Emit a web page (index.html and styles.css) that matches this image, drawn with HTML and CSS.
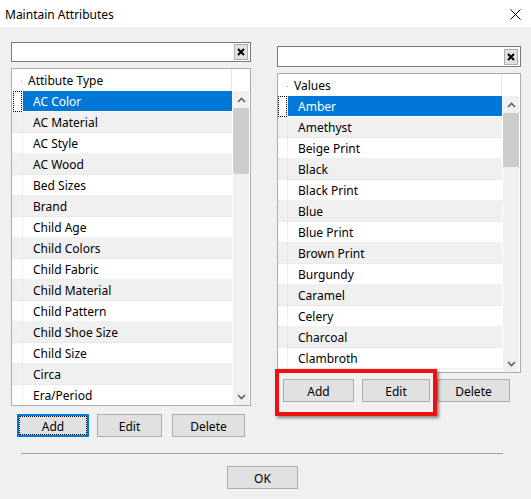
FILE: index.html
```html
<!DOCTYPE html>
<html>
<head>
<meta charset="utf-8">
<link rel="stylesheet" href="styles.css">
</head>
<body>
<div class="dialog">
  <div class="titlebar">
    <span class="title">Maintain Attributes</span>
    <svg class="close" width="11" height="11" viewBox="0 0 11 11"><path d="M0.5 0.5 L10.5 10.5 M10.5 0.5 L0.5 10.5" stroke="#000" stroke-width="1" fill="none"/></svg>
  </div>
  <div class="content">
    <div class="panels">
      <div class="panel panel-left">
        <div class="search search-left">
          <span class="clear"><svg width="8" height="8" viewBox="0 0 8 8"><path d="M1 1 L7 7 M7 1 L1 7" stroke="#000" stroke-width="2" fill="none"/></svg></span>
        </div>
        <div class="list list-left">
          <div class="grid">
            <div class="header"><span class="hind"></span><span class="hcell">Attibute Type</span></div>
            <div class="row sel"><span class="ind"><span class="focus"></span></span><span class="cell">AC Color</span></div>
            <div class="row alt"><span class="ind"></span><span class="cell">AC Material</span></div>
            <div class="row"><span class="ind"></span><span class="cell">AC Style</span></div>
            <div class="row alt"><span class="ind"></span><span class="cell">AC Wood</span></div>
            <div class="row"><span class="ind"></span><span class="cell">Bed Sizes</span></div>
            <div class="row alt"><span class="ind"></span><span class="cell">Brand</span></div>
            <div class="row"><span class="ind"></span><span class="cell">Child Age</span></div>
            <div class="row alt"><span class="ind"></span><span class="cell">Child Colors</span></div>
            <div class="row"><span class="ind"></span><span class="cell">Child Fabric</span></div>
            <div class="row alt"><span class="ind"></span><span class="cell">Child Material</span></div>
            <div class="row"><span class="ind"></span><span class="cell">Child Pattern</span></div>
            <div class="row alt"><span class="ind"></span><span class="cell">Child Shoe Size</span></div>
            <div class="row"><span class="ind"></span><span class="cell">Child Size</span></div>
            <div class="row alt"><span class="ind"></span><span class="cell">Circa</span></div>
            <div class="row"><span class="ind"></span><span class="cell">Era/Period</span></div>
          </div>
          <div class="vscroll">
            <div class="vs-head"></div>
            <div class="track track-left">
              <svg class="arrow" width="9" height="6" viewBox="0 0 9 6"><path d="M1 5 L4.5 1.5 L8 5" stroke="#606060" stroke-width="1.6" fill="none"/></svg>
              <div class="thumb thumb-left"></div>
              <div class="spring"></div>
              <svg class="arrow" width="9" height="6" viewBox="0 0 9 6"><path d="M1 1 L4.5 4.5 L8 1" stroke="#606060" stroke-width="1.6" fill="none"/></svg>
            </div>
          </div>
        </div>
        <div class="buttons buttons-left">
          <button class="btn focused w-add">Add</button>
          <button class="btn w-edit">Edit</button>
          <button class="btn w-del">Delete</button>
        </div>
      </div>
      <div class="panel panel-right">
        <div class="search search-right">
          <span class="clear"><svg width="8" height="8" viewBox="0 0 8 8"><path d="M1 1 L7 7 M7 1 L1 7" stroke="#000" stroke-width="2" fill="none"/></svg></span>
        </div>
        <div class="list list-right">
          <div class="grid">
            <div class="header"><span class="hind hind-r"></span><span class="hcell">Values</span></div>
            <div class="row sel"><span class="ind ind-r"><span class="focus"></span></span><span class="cell">Amber</span></div>
            <div class="row alt"><span class="ind ind-r"></span><span class="cell">Amethyst</span></div>
            <div class="row"><span class="ind ind-r"></span><span class="cell">Beige Print</span></div>
            <div class="row alt"><span class="ind ind-r"></span><span class="cell">Black</span></div>
            <div class="row"><span class="ind ind-r"></span><span class="cell">Black Print</span></div>
            <div class="row alt"><span class="ind ind-r"></span><span class="cell">Blue</span></div>
            <div class="row"><span class="ind ind-r"></span><span class="cell">Blue Print</span></div>
            <div class="row alt"><span class="ind ind-r"></span><span class="cell">Brown Print</span></div>
            <div class="row"><span class="ind ind-r"></span><span class="cell">Burgundy</span></div>
            <div class="row alt"><span class="ind ind-r"></span><span class="cell">Caramel</span></div>
            <div class="row"><span class="ind ind-r"></span><span class="cell">Celery</span></div>
            <div class="row alt"><span class="ind ind-r"></span><span class="cell">Charcoal</span></div>
            <div class="row"><span class="ind ind-r"></span><span class="cell">Clambroth</span></div>
          </div>
          <div class="vscroll vscroll-right">
            <div class="vs-head"></div>
            <div class="track">
              <svg class="arrow" width="9" height="6" viewBox="0 0 9 6"><path d="M1 5 L4.5 1.5 L8 5" stroke="#606060" stroke-width="1.6" fill="none"/></svg>
              <div class="thumb thumb-right"></div>
              <div class="spring"></div>
              <svg class="arrow" width="9" height="6" viewBox="0 0 9 6"><path d="M1 1 L4.5 4.5 L8 1" stroke="#606060" stroke-width="1.6" fill="none"/></svg>
            </div>
          </div>
        </div>
        <div class="buttons buttons-right">
          <button class="btn w-add-r">Add</button>
          <button class="btn w-edit-r">Edit</button>
          <button class="btn w-del">Delete</button>
        </div>
      </div>
    </div>
    <div class="footer">
      <div class="separator"></div>
      <div class="ok-row"><button class="btn w-ok">OK</button></div>
    </div>
    <div class="highlight"></div>
  </div>
</div>
</body>
</html>
```

FILE: styles.css
```css
* { box-sizing: border-box; }
html, body { margin: 0; padding: 0; }
body {
  width: 531px;
  height: 499px;
  overflow: hidden;
  background: #f0f0f0;
  font-family: "Noto Sans", "Open Sans", sans-serif;
  font-size: 12px;
  color: #000;
}
.dialog { position: relative; width: 531px; height: 499px; }
.titlebar {
  height: 27px;
  background: #fff;
  display: flex;
  align-items: center;
  justify-content: space-between;
  padding: 0 10px 0 5px;
}
.title { font-size: 12px; line-height: 16px; margin-top: 2px; }
.close { display: block; margin-top: 1px; }
.content { position: relative; height: 472px; padding-top: 15px; }
.panels { display: flex; align-items: flex-start; padding-left: 11px; }
.panel-left { width: 240px; }
.panel-right { width: 244px; margin-left: 26px; margin-top: 4px; }
.search {
  background: #fff;
  border: 1px solid #7a7a7a;
  display: flex;
  justify-content: flex-end;
  align-items: center;
  padding-right: 2px;
}
.search-left { height: 20px; }
.search-right { height: 21px; }
.clear {
  width: 14px;
  height: 16px;
  background: #e1e1e1;
  border: 1px solid #adadad;
  display: flex;
  align-items: center;
  justify-content: center;
}
.clear svg { display: block; }
.list {
  margin-top: 6px;
  background: #fff;
  border: 1px solid #adadad;
  display: flex;
  overflow: hidden;
}
.list-left { height: 338px; }
.list-right { height: 300px; }
.grid { flex: 1; min-width: 0; }
.header { height: 22px; display: flex; align-items: stretch; }
.hind { width: 10px; position: relative; }
.hind::after {
  content: "";
  position: absolute;
  right: 0;
  top: 12px;
  width: 1px;
  height: 1px;
  background: #999;
}
.hind-r { width: 10px; }
.hcell {
  flex: 1;
  padding: 1px 0 0 6px;
  line-height: 21px;
  border-right: 1px solid #e5e5e5;
}
.row {
  height: 21px;
  display: flex;
  border-bottom: 1px dotted #e2e2e2;
}
.row.alt { background: #f0f0f0; }
.ind {
  width: 11px;
  border-right: 1px dotted #e2e2e2;
  padding-left: 1px;
}
.ind-r { width: 10px; padding-left: 0; }
.cell { flex: 1; padding: 1px 0 0 10px; line-height: 19px; white-space: nowrap; }
.row.sel .cell { background: #0078d7; color: #fff; }
.row.sel { border-bottom-color: #fff; }
.focus {
  display: block;
  width: 9px;
  height: 21px;
  border: 1px dotted #000;
}
.vscroll { width: 16px; margin: 0 1px; display: flex; flex-direction: column; }
.vs-head { height: 22px; background: #fff; }
.track { flex: 1; background: #f0f0f0; display: flex; flex-direction: column; align-items: center; }
.arrow { display: block; margin: 6px 0 5px; }
.thumb { width: 16px; background: #cdcdcd; }
.thumb-left { height: 66px; }
.thumb-right { height: 54px; }
.spring { flex: 1; }
.buttons { display: flex; }
.buttons-left { margin-top: 8px; padding-left: 6px; }
.buttons-right { margin-top: 6px; padding-left: 6px; }
.btn {
  height: 23px;
  background: #e1e1e1;
  border: 1px solid #adadad;
  font-family: inherit;
  font-size: 12px;
  color: #000;
  padding: 1px 0 0;
  margin: 0;
  line-height: 19px;
}
.btn.focused {
  border: 2px solid #0078d7;
  outline: 1px dotted #000;
  outline-offset: -3px;
}
.w-add { width: 72px; }
.w-edit { width: 65px; margin-left: 8px; }
.w-del { width: 73px; margin-left: 10px; }
.w-add-r { width: 71px; }
.w-edit-r { width: 68px; margin-left: 8px; }
.buttons-right .w-del { margin-left: 7px; }
.w-ok { width: 71px; }
.footer { margin: 16px 28px 0 21px; }
.separator { height: 1px; background: #a0a0a0; }
.ok-row { display: flex; justify-content: center; margin-top: 12px; padding-left: 1px; }
.highlight {
  position: absolute;
  left: 275px;
  top: 342px;
  width: 162px;
  height: 47px;
  border: 4px solid #ee1111;
  box-shadow: 2px 2px 3px rgba(0, 0, 0, 0.45);
}
```
